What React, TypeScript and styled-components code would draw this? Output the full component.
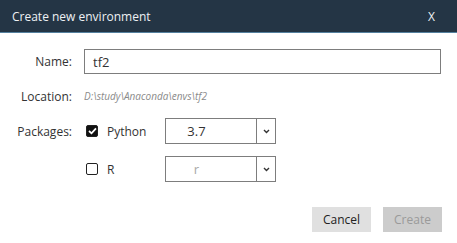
import React from "react";
import styled, { createGlobalStyle } from "styled-components";

const GlobalStyle = createGlobalStyle`
  html, body {
    margin: 0;
    padding: 0;
    background: #ffffff;
  }
  body {
    font-family: "Open Sans", "Noto Sans", sans-serif;
    color: #333333;
  }
`;

const Dialog = styled.div`
  width: 457px;
  height: 243px;
  background: #ffffff;
  display: flex;
  flex-direction: column;
  box-sizing: border-box;
`;

const TitleBar = styled.header`
  height: 32px;
  flex: 0 0 32px;
  background: #243545;
  border-bottom: 1px solid #55819f;
  display: flex;
  align-items: center;
  justify-content: space-between;
  padding: 0 22px 0 12px;
  color: #eef1f4;
  font-size: 12px;

  .close {
    font-size: 12px;
  }
`;

const Form = styled.div`
  display: grid;
  grid-template-columns: 72px 1fr;
  column-gap: 12px;
  padding: 16px 16px 0 0;
`;

const Label = styled.div<{ $h: number; $mt?: number }>`
  height: ${(p) => p.$h}px;
  margin-top: ${(p) => p.$mt ?? 0}px;
  display: flex;
  align-items: center;
  justify-content: flex-end;
  font-size: 12px;
  color: #333;
  white-space: nowrap;
`;

const Field = styled.div<{ $h: number; $mt?: number }>`
  height: ${(p) => p.$h}px;
  margin-top: ${(p) => p.$mt ?? 0}px;
  display: flex;
  align-items: center;
`;

const TextInput = styled.div`
  box-sizing: border-box;
  width: 100%;
  height: 25px;
  border: 1px solid #7d7d7d;
  padding-left: 8px;
  display: flex;
  align-items: center;
  font-size: 13px;
  color: #333;
`;

const Path = styled.span`
  font-style: italic;
  font-size: 10px;
  color: #8a8a8a;
`;

const Check = styled.span<{ $on?: boolean }>`
  box-sizing: border-box;
  width: 12px;
  height: 12px;
  margin-left: 2px;
  border-radius: 2px;
  border: 1.5px solid #222;
  background: ${(p) => (p.$on ? "#111" : "#fff")};
  display: flex;
  align-items: center;
  justify-content: center;
`;

const PkgName = styled.span`
  width: 58px;
  margin-left: 9px;
  font-size: 12px;
  color: #333;
`;

const Select = styled.div<{ $muted?: boolean }>`
  box-sizing: border-box;
  width: 111px;
  height: 26px;
  border: 1px solid #7d7d7d;
  display: flex;

  .value {
    flex: 1;
    display: flex;
    align-items: center;
    justify-content: center;
    padding-right: 29px;
    font-size: 13px;
    color: ${(p) => (p.$muted ? "#a8a8a8" : "#333")};
  }

  .arrow {
    width: 18px;
    border-left: 1px solid #7d7d7d;
    display: flex;
    align-items: center;
    justify-content: center;
  }
`;

const Footer = styled.div`
  display: flex;
  justify-content: flex-end;
  gap: 12px;
  padding: 25px 15px 0 0;
`;

const Button = styled.button<{ $disabled?: boolean }>`
  width: 59px;
  height: 25px;
  border: none;
  padding: 0;
  font-family: inherit;
  font-size: 12px;
  background: ${(p) => (p.$disabled ? "#cccccc" : "#e0e0e0")};
  color: ${(p) => (p.$disabled ? "#9a9a9a" : "#222")};
`;

const Chevron = () => (
  <svg width="7" height="5" viewBox="0 0 7 5">
    <path d="M1 1 L3.5 3.5 L6 1" fill="none" stroke="#333" strokeWidth="1.4" />
  </svg>
);

const Tick = () => (
  <svg width="9" height="8" viewBox="0 0 9 8">
    <path d="M1 4 L3.5 6.3 L8 1.3" fill="none" stroke="#fff" strokeWidth="1.8" />
  </svg>
);

const packages = [
  { name: "Python", value: "3.7", on: true },
  { name: "R", value: "r", on: false },
];

const App: React.FC = () => {
  return (
    <>
      <GlobalStyle />
      <Dialog>
        <TitleBar>
          <span>Create new environment</span>
          <span className="close">X</span>
        </TitleBar>
        <Form>
          <Label $h={25}>Name:</Label>
          <Field $h={25}>
            <TextInput>tf2</TextInput>
          </Field>

          <Label $h={44}>Location:</Label>
          <Field $h={44}>
            <Path>D:\study\Anaconda\envs\tf2</Path>
          </Field>

          {packages.map((pkg, i) => (
            <React.Fragment key={pkg.name}>
              <Label $h={26} $mt={i ? 12 : 0}>
                {i === 0 ? "Packages:" : ""}
              </Label>
              <Field $h={26} $mt={i ? 12 : 0}>
                <Check $on={pkg.on}>{pkg.on && <Tick />}</Check>
                <PkgName>{pkg.name}</PkgName>
                <Select $muted={!pkg.on}>
                  <div className="value">{pkg.value}</div>
                  <div className="arrow">
                    <Chevron />
                  </div>
                </Select>
              </Field>
            </React.Fragment>
          ))}
        </Form>
        <Footer>
          <Button>Cancel</Button>
          <Button $disabled>Create</Button>
        </Footer>
      </Dialog>
    </>
  );
};

export default App;
